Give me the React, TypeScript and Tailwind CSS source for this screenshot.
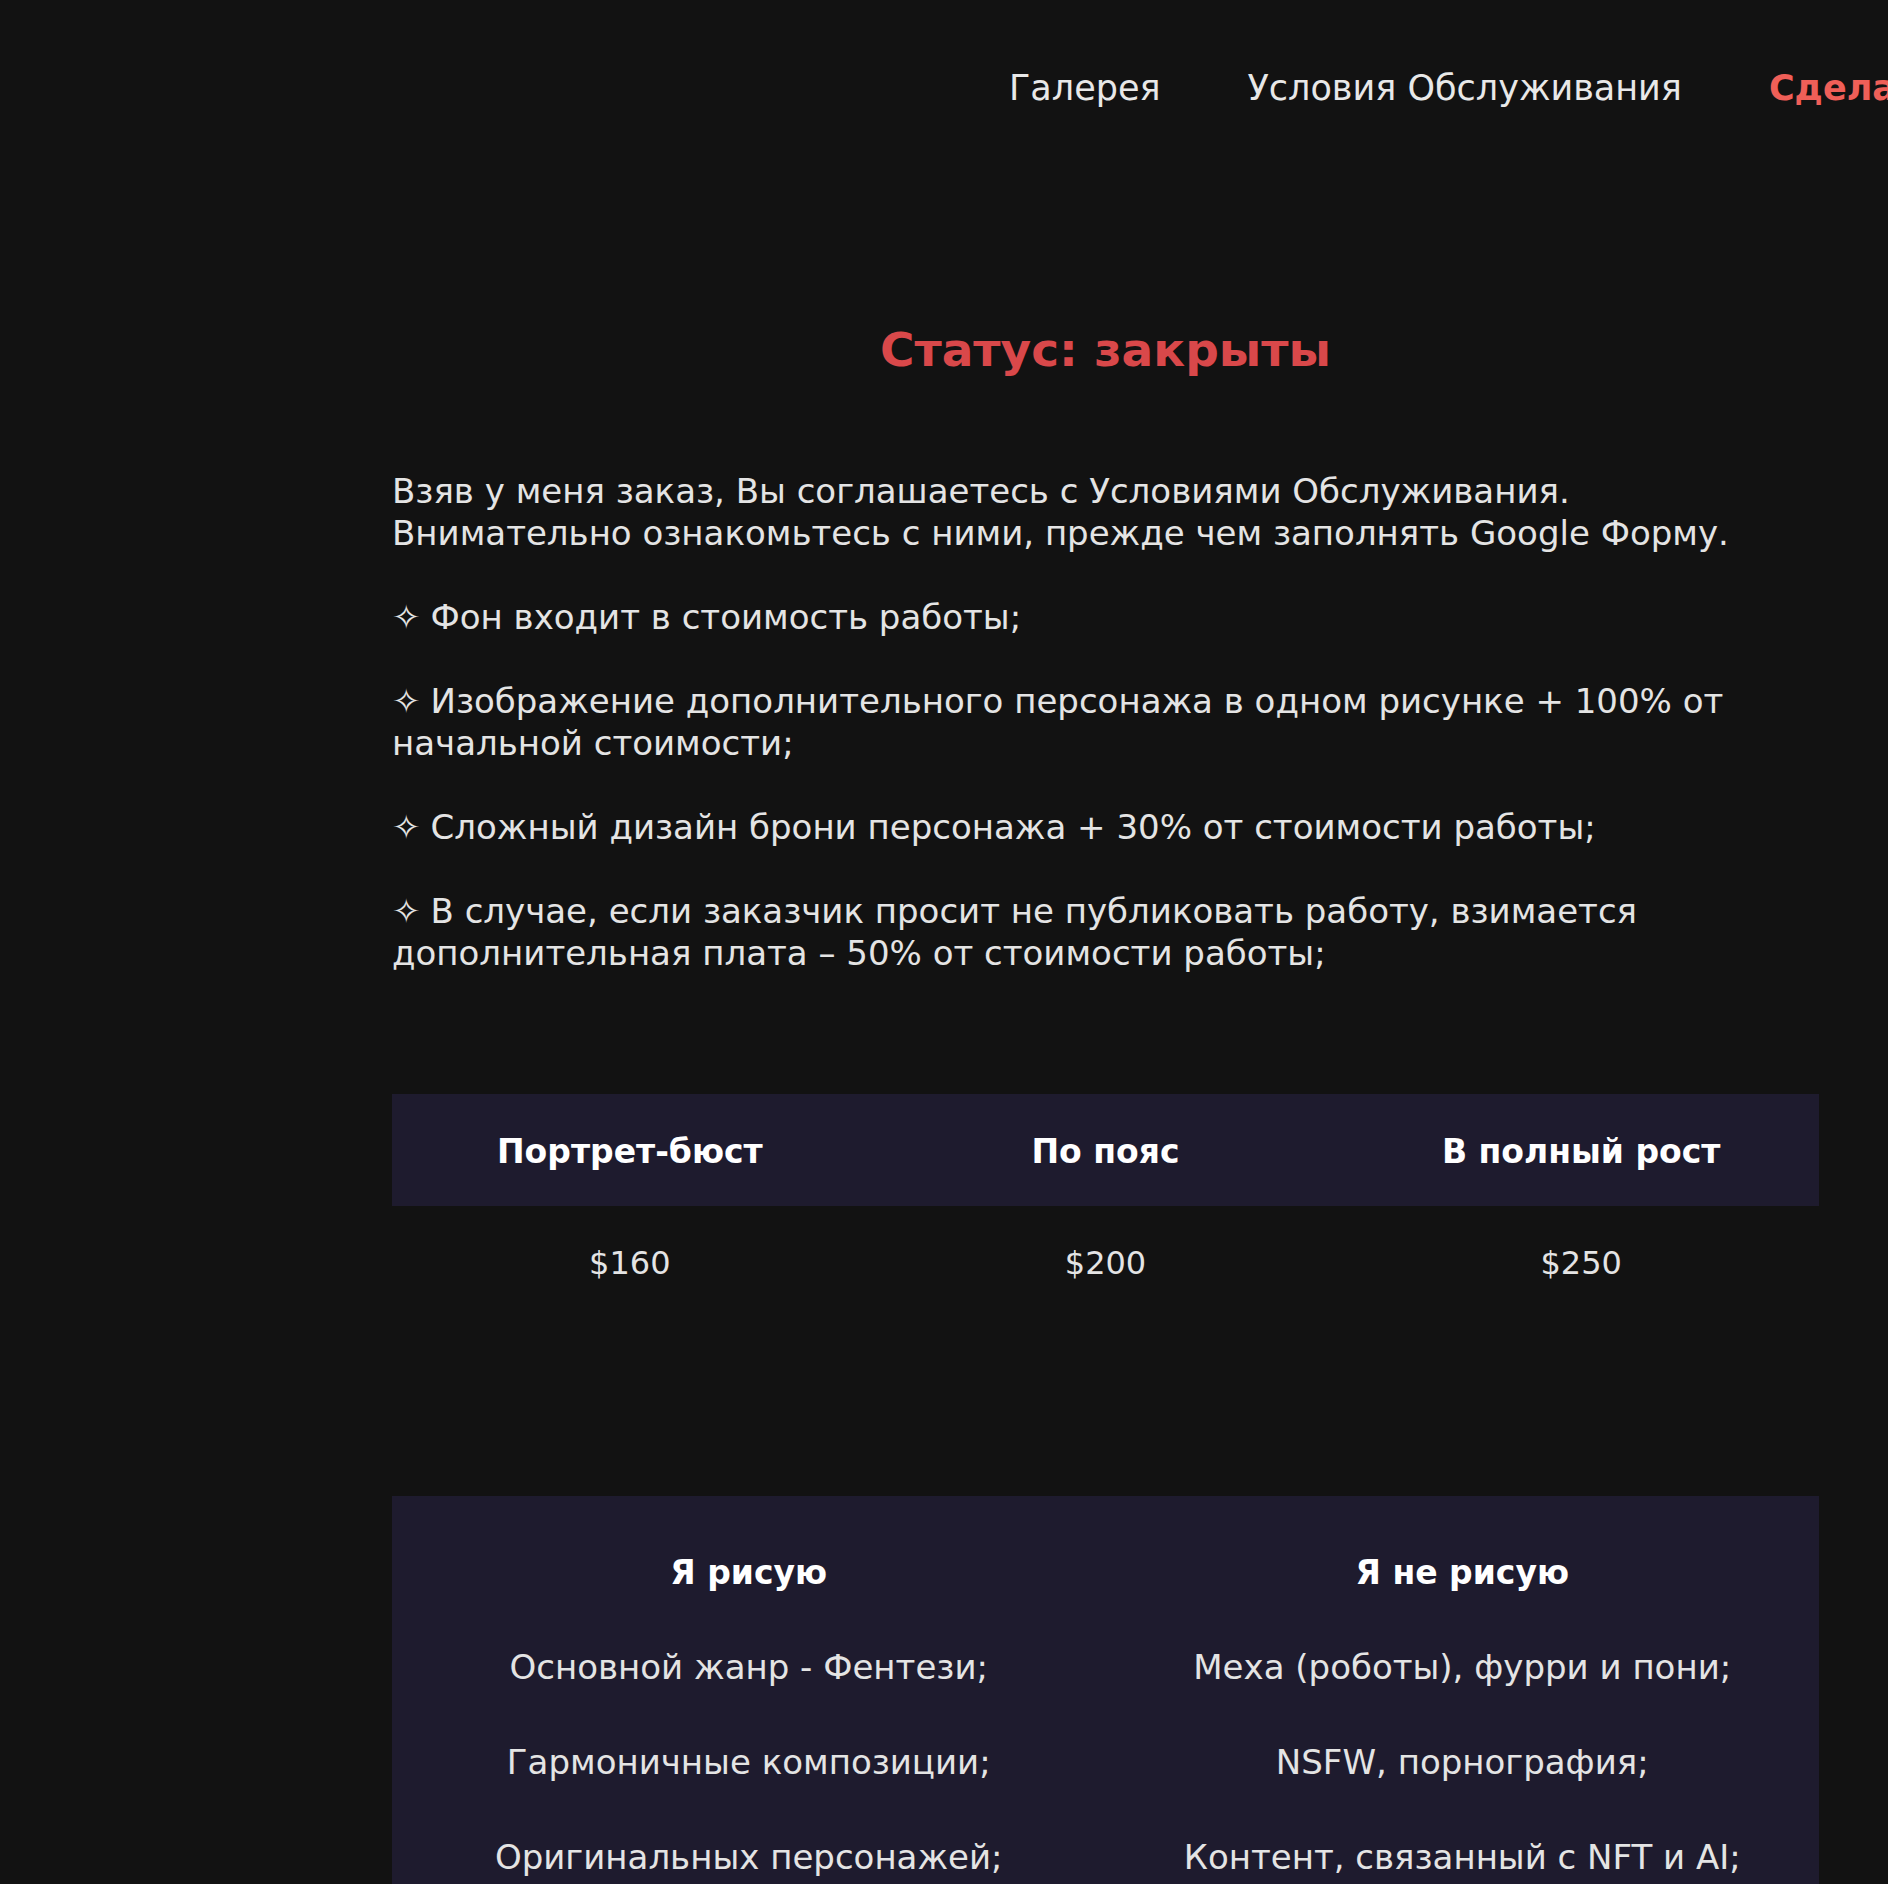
const font = "font-['DejaVu_Sans','Noto_Sans',sans-serif]"

const rules = [
  <>Фон входит в стоимость работы;</>,
  <>
    Изображение дополнительного персонажа в одном рисунке + 100% от
    <br />
    начальной стоимости;
  </>,
  <>Сложный дизайн брони персонажа + 30% от стоимости работы;</>,
  <>
    В случае, если заказчик просит не публиковать работу, взимается
    <br />
    дополнительная плата – 50% от стоимости работы;
  </>,
]

const prices = [
  { name: "Портрет-бюст", price: "$160" },
  { name: "По пояс", price: "$200" },
  { name: "В полный рост", price: "$250" },
]

const draw = ["Основной жанр - Фентези;", "Гармоничные композиции;", "Оригинальных персонажей;"]
const dontDraw = ["Меха (роботы), фурри и пони;", "NSFW, порнография;", "Контент, связанный с NFT и AI;"]

export default function App() {
  return (
    <div className={`min-h-screen w-full overflow-hidden bg-[#121212] text-[#e6e6e6] ${font}`}>
      {/* Nav */}
      <header className="flex h-[176px] items-center gap-[87px] whitespace-nowrap pl-[1009px] text-[35px]">
        <a className="text-[#e8e8e8]">Галерея</a>
        <a className="text-[#e8e8e8]">Условия Обслуживания</a>
        <a className="font-bold text-[#ef5f58]">Сделать заказ</a>
      </header>

      <main className="ml-[392px] w-[1427px] pb-10">
        <h1 className="mt-[144px] text-center text-[47px] leading-[60px] font-bold text-[#d9484a]">
          Статус: закрыты
        </h1>

        <div className="mt-[90px] flex flex-col gap-[42px] text-[34px] leading-[42px] text-[#e4e4e4]">
          <p>
            Взяв у меня заказ, Вы соглашаетесь с Условиями Обслуживания.
            <br />
            Внимательно ознакомьтесь с ними, прежде чем заполнять Google Форму.
          </p>
          {rules.map((r, i) => (
            <p key={i}>
              <span className="mr-[10px]">✧</span>
              {r}
            </p>
          ))}
        </div>

        {/* Prices */}
        <div className="mt-[120px]">
          <div className="grid h-[112px] grid-cols-3 items-center bg-[#1e1b2e] pt-[3px] text-center text-[33px] font-bold text-white">
            {prices.map((p) => (
              <div key={p.name}>{p.name}</div>
            ))}
          </div>
          <div className="grid h-[114px] grid-cols-3 items-center text-center text-[32px] text-[#e4e4e4]">
            {prices.map((p) => (
              <div key={p.name}>{p.price}</div>
            ))}
          </div>
        </div>

        {/* Do / don't */}
        <div className="mt-[176px] grid grid-cols-2 bg-[#1e1b2e] pt-[29px] pb-[30px] text-center">
          <div className="flex flex-col">
            <div className="flex h-[95px] items-center justify-center text-[33px] font-bold text-white">Я рисую</div>
            {draw.map((d) => (
              <div key={d} className="flex h-[95px] items-center justify-center text-[34px] text-[#e4e4e4]">{d}</div>
            ))}
          </div>
          <div className="flex flex-col">
            <div className="flex h-[95px] items-center justify-center text-[33px] font-bold text-white">Я не рисую</div>
            {dontDraw.map((d) => (
              <div key={d} className="flex h-[95px] items-center justify-center text-[34px] text-[#e4e4e4]">{d}</div>
            ))}
          </div>
        </div>
      </main>
    </div>
  )
}
